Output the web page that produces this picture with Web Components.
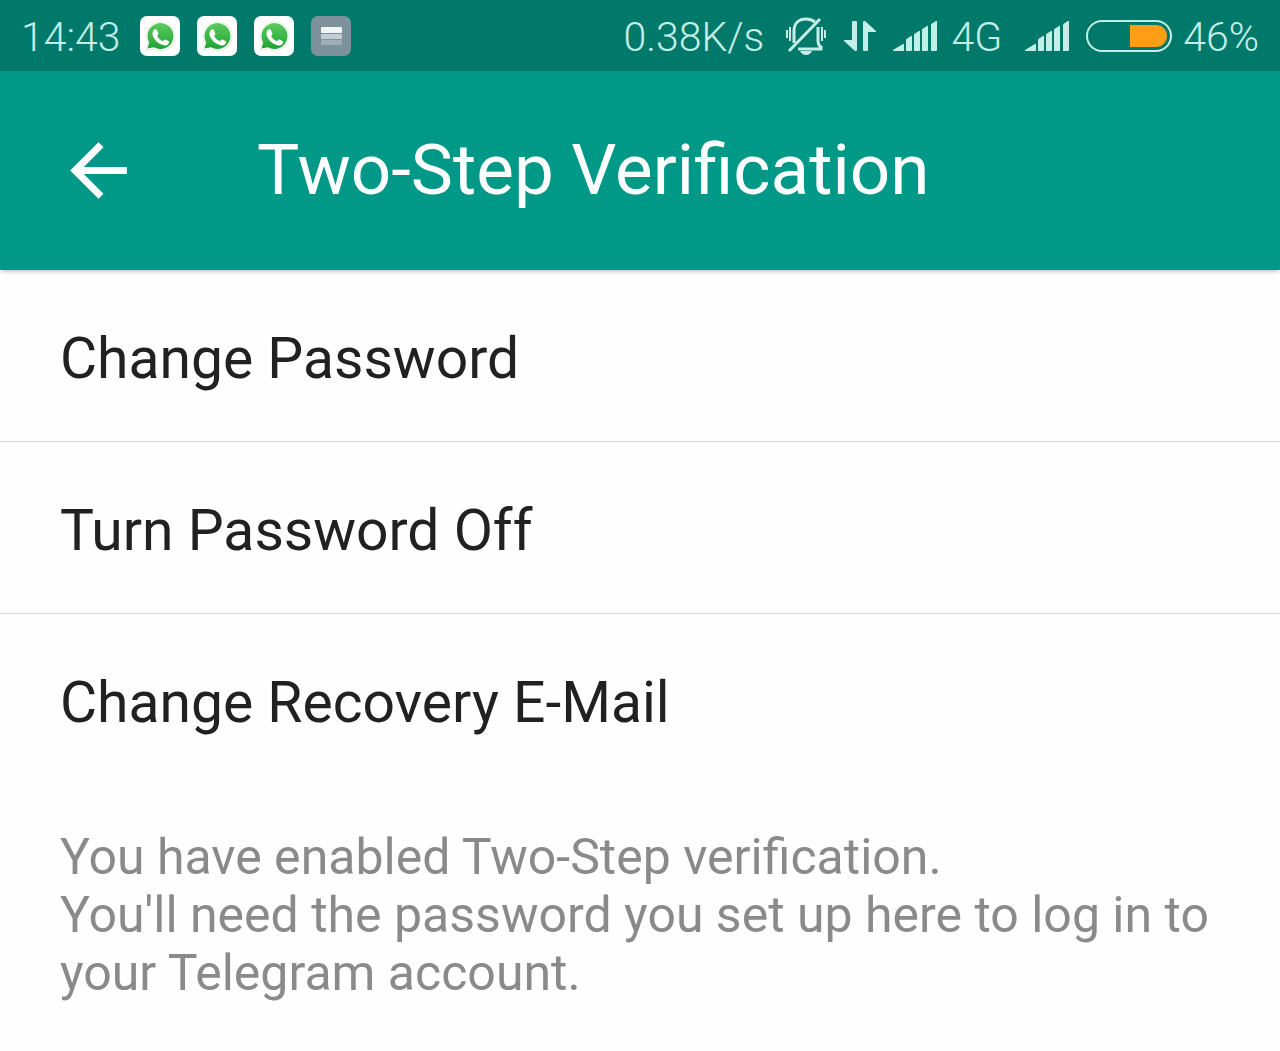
<!DOCTYPE html>
<html lang="en">
<head>
<meta charset="utf-8">
<meta name="viewport" content="width=device-width, initial-scale=1">
<title>Two-Step Verification</title>
<style>
  body {
    margin: 0;
    background: #fefefe;
    font-family: Roboto, sans-serif;
  }
</style>
</head>
<body>
<two-step-page></two-step-page>

<script>
class ChatIcon extends HTMLElement {
  connectedCallback() {
    this.attachShadow({mode: 'open'}).innerHTML = `
      <style>
        :host {
          display: block;
          width: 40px;
          height: 40px;
        }
        svg { display: block; }
      </style>
      <svg width="40" height="40" viewBox="0 0 40 40" role="img" aria-label="New chat message">
        <defs>
          <linearGradient id="green" x1="0" y1="0" x2="0" y2="1">
            <stop offset="0" stop-color="#5dcb5f"/>
            <stop offset="1" stop-color="#1fa332"/>
          </linearGradient>
        </defs>
        <rect width="40" height="40" rx="7" fill="#fff"/>
        <path d="M6 35 8 27.500A14.500 14.500 0 1 1 13.500 33Z" fill="none" stroke="#e3eee3" stroke-width="1"/>
        <path d="M7.500 32.500 9.200 26.500A13 13 0 1 1 14 31.300Z" fill="url(#green)"/>
        <path d="M13.500 14.500c.8-1.400 2.800-1.700 3.400-.4l1.400 3.100c.4 1-.2 1.700-1.200 2.700 1.400 2.500 3.200 4.200 5.900 5.300 1-1.200 1.700-2 2.600-1.600l3 1.500c1.200.7.500 2.500-.6 3.400-1.600 1.300-3.700 1.200-6 .3-4-1.500-7-4.500-8.700-7.900-1.200-2.300-1.100-4.500.2-6.400Z" fill="#fff"/>
      </svg>
    `;
  }
}

class NoteIcon extends HTMLElement {
  connectedCallback() {
    this.attachShadow({mode: 'open'}).innerHTML = `
      <style>
        :host {
          display: block;
          width: 40px;
          height: 40px;
        }
        svg { display: block; }
      </style>
      <svg width="40" height="40" viewBox="0 0 40 40" role="img" aria-label="Notification">
        <rect width="40" height="40" rx="7" fill="#7d929c"/>
        <rect x="10" y="11" width="21" height="6" rx="1" fill="#f1f5f5"/>
        <rect x="10" y="18" width="21" height="5" rx="1" fill="#c3cdd1"/>
        <rect x="10" y="24" width="21" height="5" rx="1" fill="#9eafb6"/>
      </svg>
    `;
  }
}

class SignalBars extends HTMLElement {
  connectedCallback() {
    this.attachShadow({mode: 'open'}).innerHTML = `
      <style>
        :host { display: block; }
        svg { display: block; }
      </style>
      <svg width="44" height="32" viewBox="0 0 44 32" fill="currentColor" role="img" aria-label="Signal">
        <path d="M0 31v-1L10 24q1-.5 1 .5V31Z"/>
        <path d="M13 31V20q0-1 1-1.500l4-2.500q1-.5 1 .5V30q0 1-1 1Z"/>
        <path d="M21 31V15q0-1 1-1.500l4-2.500q1-.5 1 .5V30q0 1-1 1Z"/>
        <path d="M29 31V10q0-1 1-1.500l4-2.500q1-.5 1 .5V30q0 1-1 1Z"/>
        <path d="M38 31V5q0-1 1-1.500l4-2.500q1-.5 1 .5V30q0 1-1 1Z"/>
      </svg>
    `;
  }
}

class BatteryMeter extends HTMLElement {
  connectedCallback() {
    const level = Number(this.getAttribute('level'));
    this.attachShadow({mode: 'open'}).innerHTML = `
      <style>
        :host {
          display: flex;
          justify-content: flex-end;
          box-sizing: border-box;
          width: 86px;
          height: 32px;
          padding: 3px;
          border: 2px solid currentColor;
          border-radius: 16px;
        }
        .level {
          width: ${level}%;
          border-radius: 0 11px 11px 0;
          background: #ff9d17;
        }
      </style>
      <div class="level"></div>
    `;
  }
}

class StatusBar extends HTMLElement {
  connectedCallback() {
    this.attachShadow({mode: 'open'}).innerHTML = `
      <style>
        :host {
          display: flex;
          justify-content: space-between;
          align-items: center;
          height: 71px;
          padding: 0 21px;
          background: #00796b;
          color: #c4eee8;
          font-size: 41px;
          font-weight: 300;
          line-height: 50px;
          white-space: nowrap;
        }
        .group {
          display: flex;
          align-items: center;
          gap: 17px;
        }
        .time { padding-right: 2px; }
        .speed { padding-right: 4px; }
        .battery {
          display: flex;
          align-items: center;
          gap: 11px;
        }
        .network {
          display: flex;
          align-items: center;
          gap: 14px;
          padding-right: 6px;
        }
        span { padding-top: 3px; }
        svg { display: block; }
      </style>
      <div class="group">
        <span class="time">14:43</span>
        <slot name="notifications"></slot>
      </div>
      <div class="group">
        <span class="speed">0.38K/s</span>
        <svg width="42" height="40" viewBox="0 0 42 40" fill="none" stroke="currentColor" stroke-width="3" role="img" aria-label="Silent">
          <path d="M9 27V15C9 7 14 3 21 3q5 0 9 3"/>
          <path d="M33 11v14q0 4 3 6v2H13"/>
          <path d="M4 35 35 3"/>
          <path d="M2 14v8M5 11v14M37 11v14M40 14v8" stroke-width="2"/>
          <path d="M15 35h12q-2 4-6 4t-6-4Z" fill="currentColor" stroke="none"/>
        </svg>
        <svg width="32" height="32" viewBox="0 0 32 32" fill="currentColor" role="img" aria-label="Data transfer">
          <path d="M8 2q0-1 1-1h3q1 0 1 1v28q0 1-1 1h-1L0 21v-1h8Z"/>
          <path d="M24 30q0 1-1 1h-3q-1 0-1-1V2q0-1 1-1h1l11 10v1h-8Z"/>
        </svg>
        <div class="network">
          <signal-bars></signal-bars>
          <span>4G</span>
        </div>
        <signal-bars></signal-bars>
        <div class="battery">
          <battery-meter level="49"></battery-meter>
          <span>46%</span>
        </div>
      </div>
    `;
  }
}

class AppBar extends HTMLElement {
  connectedCallback() {
    this.attachShadow({mode: 'open'}).innerHTML = `
      <style>
        :host {
          display: flex;
          align-items: center;
          gap: 116px;
          height: 199px;
          padding: 0 56px;
          background: #009886;
          color: #fff;
          box-shadow: 0 3px 4px -1px rgba(0, 0, 0, 0.2);
        }
        button {
          padding: 0;
          border: 0;
          background: none;
          color: inherit;
          cursor: pointer;
        }
        svg { display: block; }
        h1 {
          margin: 0;
          padding-bottom: 2px;
          font-size: 71px;
          font-weight: 400;
          line-height: 84px;
        }
      </style>
      <button type="button" aria-label="Back">
        <svg width="85" height="85" viewBox="0 0 24 24" fill="currentColor">
          <path d="M20 11H7.830l5.590-5.590L12 4l-8 8 8 8 1.410-1.410L7.830 13H20v-2z"/>
        </svg>
      </button>
      <h1><slot></slot></h1>
    `;
  }
}

class SettingsRow extends HTMLElement {
  connectedCallback() {
    this.attachShadow({mode: 'open'}).innerHTML = `
      <style>
        :host {
          display: block;
          border-bottom: 1px solid #d5d5d5;
        }
        :host([last]) { border-bottom-color: transparent; }
        button {
          display: block;
          width: 100%;
          padding: 55px 60px 48px;
          border: 0;
          background: none;
          color: #212121;
          font: inherit;
          font-size: 57px;
          line-height: 68px;
          text-align: left;
          cursor: pointer;
        }
      </style>
      <button type="button"><slot></slot></button>
    `;
  }
}

class SettingsNote extends HTMLElement {
  connectedCallback() {
    this.attachShadow({mode: 'open'}).innerHTML = `
      <style>
        :host {
          display: block;
          padding: 42px 60px;
          color: #8a8a8a;
          font-size: 50px;
          line-height: 58px;
        }
        p { margin: 0; }
      </style>
      <p><slot></slot></p>
    `;
  }
}

class TwoStepPage extends HTMLElement {
  connectedCallback() {
    this.attachShadow({mode: 'open'}).innerHTML = `
      <style>
        :host { display: block; }
      </style>
      <status-bar>
        <chat-icon slot="notifications"></chat-icon>
        <chat-icon slot="notifications"></chat-icon>
        <chat-icon slot="notifications"></chat-icon>
        <note-icon slot="notifications"></note-icon>
      </status-bar>
      <app-bar>Two-Step Verification</app-bar>
      <main>
        <settings-row>Change Password</settings-row>
        <settings-row>Turn Password Off</settings-row>
        <settings-row last>Change Recovery E-Mail</settings-row>
        <settings-note>You have enabled Two-Step verification.<br>You'll need the password you set up here to log in to your Telegram account.</settings-note>
      </main>
    `;
  }
}

customElements.define('chat-icon', ChatIcon);
customElements.define('note-icon', NoteIcon);
customElements.define('signal-bars', SignalBars);
customElements.define('battery-meter', BatteryMeter);
customElements.define('status-bar', StatusBar);
customElements.define('app-bar', AppBar);
customElements.define('settings-row', SettingsRow);
customElements.define('settings-note', SettingsNote);
customElements.define('two-step-page', TwoStepPage);
</script>
</body>
</html>
